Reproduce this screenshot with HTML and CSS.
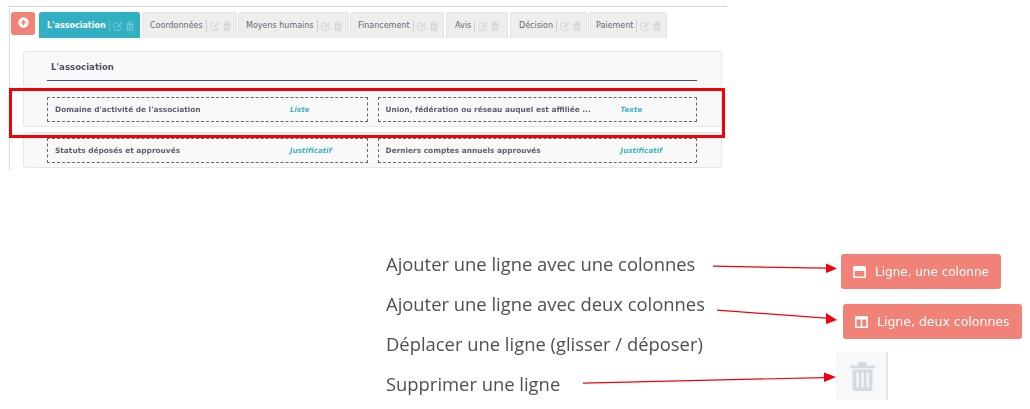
FILE: index.html
```html
<!DOCTYPE html>
<html lang="fr">
<head>
<meta charset="utf-8">
<title>Formulaire</title>
<link rel="stylesheet" href="styles.css">
</head>
<body>
<svg class="defs" width="0" height="0" aria-hidden="true">
  <symbol id="i-edit" viewBox="0 0 12 12">
    <path d="M9.500 6.800V10a1 1 0 0 1-1 1H2a1 1 0 0 1-1-1V3.500a1 1 0 0 1 1-1h4.200" fill="none" stroke="currentColor" stroke-width="1.200"/>
    <path d="M4.500 6.500 9.600 1.200l1.600 1.600L6 8H4.500z" fill="currentColor"/>
  </symbol>
  <symbol id="i-trash" viewBox="0 0 10 12">
    <path d="M0 1.800h10v1.100H0zM3.300.4h3.400v1.400H3.300z" fill="currentColor"/>
    <path d="M1 3.400h8V11a1 1 0 0 1-1 1H2a1 1 0 0 1-1-1zM2.600 4.600v6h.9v-6zm2 0v6h.9v-6zm2 0v6h.9v-6z" fill="currentColor" fill-rule="evenodd"/>
  </symbol>
</svg>

<main class="shot">
  <section class="tabs">
    <div class="add"><svg viewBox="0 0 12 12" width="11" height="11"><circle cx="6" cy="6" r="5.600" fill="#fff"/><path d="M3 6h6M6 3v6" stroke="#f08277" stroke-width="1.800"/></svg></div>
    <div class="tab active w1"><span class="name">L'association</span><span class="sep"></span><svg class="ic"><use href="#i-edit"/></svg><svg class="ic tr"><use href="#i-trash"/></svg></div>
    <div class="tab w2"><span class="name">Coordonnées</span><span class="sep"></span><svg class="ic"><use href="#i-edit"/></svg><svg class="ic tr"><use href="#i-trash"/></svg></div>
    <div class="tab w3"><span class="name">Moyens humains</span><span class="sep"></span><svg class="ic"><use href="#i-edit"/></svg><svg class="ic tr"><use href="#i-trash"/></svg></div>
    <div class="tab w4"><span class="name">Financement</span><span class="sep"></span><svg class="ic"><use href="#i-edit"/></svg><svg class="ic tr"><use href="#i-trash"/></svg></div>
    <div class="tab w5"><span class="name">Avis</span><span class="sep"></span><svg class="ic"><use href="#i-edit"/></svg><svg class="ic tr"><use href="#i-trash"/></svg></div>
    <div class="tab w6"><span class="name">Décision</span><span class="sep"></span><svg class="ic"><use href="#i-edit"/></svg><svg class="ic tr"><use href="#i-trash"/></svg></div>
    <div class="tab w7"><span class="name">Paiement</span><span class="sep"></span><svg class="ic"><use href="#i-edit"/></svg><svg class="ic tr"><use href="#i-trash"/></svg></div>
  </section>

  <section class="card head-card">
    <h2>L'association</h2>
  </section>
  <section class="card row-card">
    <div class="field"><span class="label">Domaine d'activité de l'association</span><em>Liste</em></div>
    <div class="field"><span class="label">Union, fédération ou réseau auquel est affiliée ...</span><em>Texte</em></div>
  </section>
  <section class="card row-card last">
    <div class="field"><span class="label">Statuts déposés et approuvés</span><em>Justificatif</em></div>
    <div class="field"><span class="label">Derniers comptes annuels approuvés</span><em>Justificatif</em></div>
  </section>
</main>

<section class="legend">
  <ul class="lines">
    <li>Ajouter une ligne avec une colonnes</li>
    <li>Ajouter une ligne avec deux colonnes</li>
    <li>Déplacer une ligne (glisser / déposer)</li>
    <li>Supprimer une ligne</li>
  </ul>
  <div class="tools">
    <button class="btn one"><svg viewBox="0 0 13 12" width="13" height="12"><path d="M1.500 0h10A1.500 1.500 0 0 1 13 1.500v9a1.500 1.500 0 0 1-1.500 1.500h-10A1.500 1.500 0 0 1 0 10.500v-9A1.500 1.500 0 0 1 1.500 0zM1.600 5v5.400h9.800V5z" fill="#fff" fill-rule="evenodd"/></svg>Ligne, une colonne</button>
    <button class="btn two"><svg viewBox="0 0 13 12" width="13" height="12"><path d="M1.500 0h10A1.500 1.500 0 0 1 13 1.500v9a1.500 1.500 0 0 1-1.500 1.500h-10A1.500 1.500 0 0 1 0 10.500v-9A1.500 1.500 0 0 1 1.500 0zM1.600 3.400v7h4.100v-7zm5.700 0v7h4.100v-7z" fill="#fff" fill-rule="evenodd"/></svg>Ligne, deux colonnes</button>
    <div class="bin"><svg viewBox="0 0 10 12" width="25" height="30"><use href="#i-trash"/></svg></div>
  </div>
</section>

<div class="redbox"></div>
<svg class="arrows" width="1030" height="409" viewBox="0 0 1030 409" aria-hidden="true">
  <g fill="#f4000a" stroke="none">
    <path d="M713 265.600 826 267.600 826 263.500 837 268.500 826 273 826 268.800 713 266.800z"/>
    <path d="M717 309.500 826 317.500 826 313 837 320 826 324 826 318.700 717 310.700z"/>
    <path d="M583 382.500 824 377 824 372.500 836 377 824 382 824 378.200 583 383.700z"/>
  </g>
</svg>
</body>
</html>
```
FILE: styles.css
```css
* { box-sizing: border-box; }
html, body { margin: 0; padding: 0; }
body { width: 1030px; height: 409px; background: #fff; overflow: hidden; position: relative; }
.defs { position: absolute; }

.shot {
  width: 718px; height: 164px; margin: 6px 0 0 9px;
  border-top: 1px solid #d4d4d4; border-left: 1px solid #dcdcdc;
  padding: 5px 0 0 1px;
  font-family: "DejaVu Sans", sans-serif;
  filter: blur(0.4px);
}
.tabs { display: flex; align-items: flex-start; height: 27px; }
.add {
  width: 24px; height: 23px; margin-right: 4px; background: #f08277; border-radius: 3px;
  display: flex; align-items: center; justify-content: center; padding-bottom: 2px;
}
.tab {
  height: 26px; flex: none; margin-right: 1px; padding-left: 7px;
  display: flex; align-items: center;
  background: #eeeeee; border: 1px solid #e4e4e4; border-bottom: 0; border-radius: 3px 3px 0 0;
  color: #666672; font-size: 8px; white-space: nowrap;
}
.w1 { width: 101px; margin-right: 2px; }
.w2 { width: 95px; }
.w3 { width: 111px; }
.w4 { width: 94px; margin-right: 2px; }
.w5 { width: 62px; margin-right: 2px; padding-left: 8px; }
.w6 { width: 77px; margin-right: 1px; padding-left: 8px; }
.w7 { width: 79px; padding-left: 7px; }
.sep { width: 1px; height: 12px; margin: 0 3px; background: #cfcfcf; flex: none; }
.ic { width: 10px; height: 10px; color: #d4d4d4; flex: none; }
.ic.tr { width: 8px; margin-left: 3px; }
.tab.active { background: #31b0c3; border-color: #31b0c3; color: #fff; font-weight: 700; }
.tab.active .sep { background: #5cc1d0; }
.tab.active .ic { color: #6fc8d6; }

.card {
  width: 699px; margin-left: 12px;
  background: #f8f8f8; border: 1px solid #e7e7e7; border-radius: 3px;
}
.head-card { height: 37px; margin-top: 12px; padding: 0 24px 0 23px; border-bottom-width: 0; }
.head-card h2 {
  margin: 0; height: 29px; padding: 10px 4px 0; border-bottom: 1px solid #4c4a6e;
  font-size: 8.600px; font-weight: 700; color: #4f4f64;
}
.row-card { display: flex; gap: 10px; padding: 8px 24px 0 23px; }
.head-card + .row-card { height: 39px; margin-top: 0; border-top: 1px solid #efefef; }
.row-card.last { height: 36px; margin-top: 5px; padding-top: 5px; }
.field {
  width: 321px; height: 25px; padding: 0 7px;
  display: flex; align-items: center;
  border: 1px dashed #666;
}
.field + .field { width: 320px; }
.last .field { height: 25px; }
.label { width: 235px; flex: none; font-size: 7.400px; font-weight: 700; color: #5e5e6e; white-space: nowrap; overflow: hidden; }
.field em { font-size: 7.200px; color: #43b4c6; font-style: italic; font-weight: 700; }

.legend {
  display: flex; margin: 74px 0 0 386px;
  font-family: "Open Sans", sans-serif;
  filter: blur(0.3px);
}
.lines { list-style: none; margin: 0; padding: 0; width: 450px; color: #4f4f4f; font-size: 18.400px; line-height: 40px; }
.lines li { height: 40px; white-space: nowrap; }
.tools { display: flex; flex-direction: column; align-items: flex-start; margin-top: 10px; }
.btn {
  display: flex; align-items: center; gap: 9px;
  height: 35px; border: 0; border-radius: 3px; background: #f08277; color: #fff;
  font-family: "DejaVu Sans", sans-serif; font-size: 12px; padding: 0 12px;
  white-space: nowrap;
}
.btn.one { width: 160px; margin: 0 0 0 5px; }
.btn.two { width: 179px; margin: 15px 0 0 7px; font-size: 12.500px; }
.bin {
  width: 52px; height: 48px; margin-top: 13px; padding-left: 14px;
  display: flex; align-items: center;
  background: #f7f8f9; border-right: 2px solid #e3e5e8; color: #d2dae2;
}

.redbox {
  position: absolute; left: 9px; top: 88px; width: 716px; height: 50px;
  border: 3px solid #f4000a;
}
.arrows { position: absolute; left: 0; top: 0; }
```
